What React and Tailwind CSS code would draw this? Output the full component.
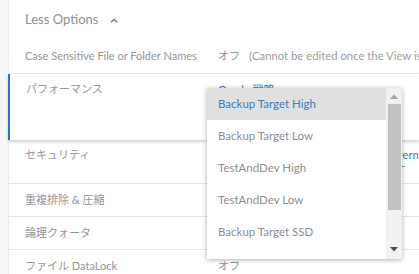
import React from "react";

const font = { fontFamily: 'Lato, "Noto Sans CJK JP", sans-serif' };

function Row({ label, children, className = "" }) {
  return (
    <div className={`flex shrink-0 border-b border-[#e6e6e6] ${className}`}>
      <div className="w-[209px] shrink-0 pl-4 text-[11px] leading-[16px] text-[#959595]">{label}</div>
      <div className="flex-1 min-w-0 whitespace-nowrap overflow-hidden text-[11px] leading-[16px]">{children}</div>
    </div>
  );
}

export default function App() {
  const items = [
    "Backup Target High",
    "Backup Target Low",
    "TestAndDev High",
    "TestAndDev Low",
    "Backup Target SSD",
  ];
  return (
    <div className="relative w-[419px] h-[274px] overflow-hidden bg-[#f7f7f7] flex" style={font}>
      <div className="w-[9px] shrink-0 border-r border-[#ececec]" />
      <div className="flex-1 min-w-0 bg-white flex flex-col">
        <div className="h-[40px] shrink-0 flex items-center pl-4">
          <span className="text-[13px] text-[#8e8e8e]">Less Options</span>
          <svg className="ml-[12px] mt-[1px]" width="8" height="5" viewBox="0 0 8 5">
            <path d="M1 4.3 L4 1.3 L7 4.3" fill="none" stroke="#6f6f6f" strokeWidth="1.3" />
          </svg>
        </div>
        <Row label="Case Sensitive File or Folder Names" className="h-[34px] pt-[8px]">
          <span className="text-[#959595]">オフ</span>
          <span className="ml-[9px] text-[11.3px] text-[#9c9c9c]">(Cannot be edited once the View is created)</span>
        </Row>
        <div className="relative shrink-0 flex h-[66px] pt-[7px] border-l-2 border-[#2f6fc4] -ml-[1px] shadow-[0_2px_3px_rgba(0,0,0,0.18)] z-10 bg-white">
          <div className="w-[208px] shrink-0 pl-4 text-[11px] leading-[16px] text-[#959595]">パフォーマンス</div>
          <div className="flex-1 text-[11px] leading-[16px] text-[#3b7bc8] whitespace-nowrap pt-[1px]">Oracle 戦略:</div>
        </div>
        <Row label="セキュリティ" className="h-[44px] pt-[7px]">
          <div className="flex flex-col leading-[11px] text-[#3b7bc8] pt-[2px]">
            <span className="flex">
              <span className="w-[165px] shrink-0 overflow-hidden">ソフトウェア暗号化 (SED) -</span>
              <span>Governance</span>
            </span>
            <span className="pl-[183px]">-</span>
          </div>
        </Row>
        <Row label="重複排除 & 圧縮" className="h-[33px] pt-[8px]">
          <span className="text-[#959595]">インライン</span>
        </Row>
        <Row label="論理クォータ" className="h-[33px] pt-[8px]">
          <span className="text-[#959595]">オフ</span>
        </Row>
        <Row label="ファイル DataLock" className="h-[33px] pt-[8px] border-b-0">
          <span className="text-[#959595]">オフ</span>
        </Row>
      </div>

      <div className="absolute left-[207px] top-[88px] w-[195px] h-[171px] bg-white shadow-[0_1px_5px_rgba(0,0,0,0.3)] flex z-20">
        <div className="flex-1 flex flex-col overflow-hidden">
          {items.map((t, i) => (
            <div
              key={t}
              className={`h-[32px] shrink-0 flex items-center pl-[11px] text-[11.5px] ${
                i === 0 ? "bg-[#e0e0e0] text-[#3b7bc8]" : "text-[#8e8e8e]"
              }`}
            >
              {t}
            </div>
          ))}
        </div>
        <div className="w-[16px] shrink-0 bg-[#f1f1f1] flex flex-col items-center">
          <svg className="mt-[6px]" width="8" height="5" viewBox="0 0 8 5">
            <path d="M0 5 L4 0.5 L8 5 Z" fill="#a3a3a3" />
          </svg>
          <div className="mt-[5px] w-[13px] h-[106px] bg-[#c1c1c1]" />
          <div className="flex-1" />
          <svg className="mb-[7px]" width="8" height="5" viewBox="0 0 8 5">
            <path d="M0 0 L8 0 L4 4.5 Z" fill="#505050" />
          </svg>
        </div>
      </div>
    </div>
  );
}
